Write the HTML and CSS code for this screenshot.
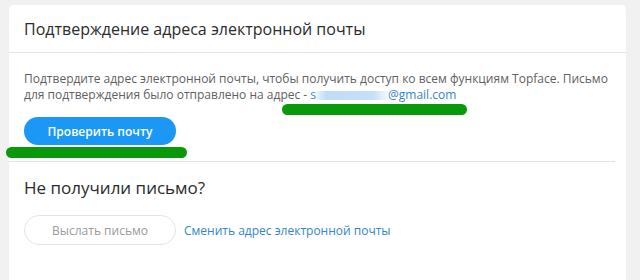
FILE: index.html
```html
<!DOCTYPE html>
<html lang="ru">
<head>
<meta charset="utf-8">
<link rel="stylesheet" href="styles.css">
</head>
<body>
<div class="page">
  <div class="card">
    <div class="card-header">Подтверждение адреса электронной почты</div>
    <div class="card-body">
      <p class="text">Подтвердите адрес электронной почты, чтобы получить доступ ко всем функциям Topface. Письмо для подтверждения было отправлено на адрес - <span class="email">s<span class="blur"></span>@gmail.com<span class="mark mark-email"></span></span></p>
      <div class="btn-wrap">
        <button class="btn-primary">Проверить почту</button>
        <span class="mark mark-btn"></span>
      </div>
    </div>
    <div class="section-divider"></div>
    <div class="card-section">
      <h2 class="subtitle">Не получили письмо?</h2>
      <div class="actions">
        <button class="btn-outline">Выслать письмо</button>
        <a class="link" href="#">Сменить адрес электронной почты</a>
      </div>
    </div>
  </div>
  <div class="scroll"></div>
</div>
</body>
</html>
```
FILE: styles.css
```css
html, body {
  margin: 0;
  padding: 0;
  height: 100%;
}
body {
  background: #f1f1f1;
  font-family: "Open Sans", "DejaVu Sans", sans-serif;
  overflow: hidden;
}
.page {
  display: flex;
  height: 100%;
  padding: 5px 0 0 9px;
  box-sizing: border-box;
}
.card {
  flex: 1;
  background: #fff;
  border-radius: 4px 4px 0 0;
  box-shadow: 0 0 1px rgba(0,0,0,0.06);
}
.scroll {
  width: 14px;
}
.card-header {
  height: 47px;
  display: flex;
  align-items: center;
  padding: 0 15px;
  font-size: 16px;
  color: #2b2b2b;
  border-bottom: 1px solid #e2e2e2;
}
.card-body {
  padding: 18px 15px 0 15px;
}
.text {
  margin: 0;
  font-size: 12px;
  line-height: 16px;
  color: #5f5f5f;
}
.email {
  position: relative;
  display: inline-block;
  height: 16px;
  line-height: 16px;
  color: #3485c9;
}
.blur {
  display: inline-block;
  width: 72px;
  height: 9px;
  vertical-align: -1px;
  background: linear-gradient(90deg, rgba(190,220,246,0.3) 0%, #bfdcf6 15%, #c6e0f7 80%, rgba(200,225,248,0.2) 100%);
}
.mark {
  position: absolute;
  background: #0a990a;
  border-radius: 6px;
}
.mark-email {
  left: -28px;
  top: 17px;
  width: 185px;
  height: 11px;
}
.btn-wrap {
  position: relative;
  margin-top: 14px;
  height: 44px;
}
.btn-primary {
  width: 152px;
  height: 28px;
  border: 0;
  border-radius: 14px;
  background: #1b97f5;
  color: #fff;
  font-family: inherit;
  font-size: 12px;
  font-weight: 600;
  padding: 0;
}
.mark-btn {
  left: -18px;
  top: 30px;
  width: 181px;
  height: 11px;
}
.section-divider {
  height: 1px;
  background: #e2e2e2;
  margin-right: 11px;
}
.card-section {
  padding: 14px 15px;
}
.subtitle {
  margin: 0;
  font-size: 17px;
  font-weight: normal;
  color: #2b2b2b;
  line-height: 24px;
}
.actions {
  margin-top: 15px;
  display: flex;
  align-items: center;
  gap: 8px;
}
.btn-outline {
  width: 152px;
  height: 30px;
  border: 1px solid #e3e3e3;
  border-radius: 15px;
  background: #fff;
  color: #9a9a9a;
  font-family: inherit;
  font-size: 12px;
  padding: 0;
}
.link {
  font-size: 12px;
  color: #3485c9;
  text-decoration: none;
}
```
